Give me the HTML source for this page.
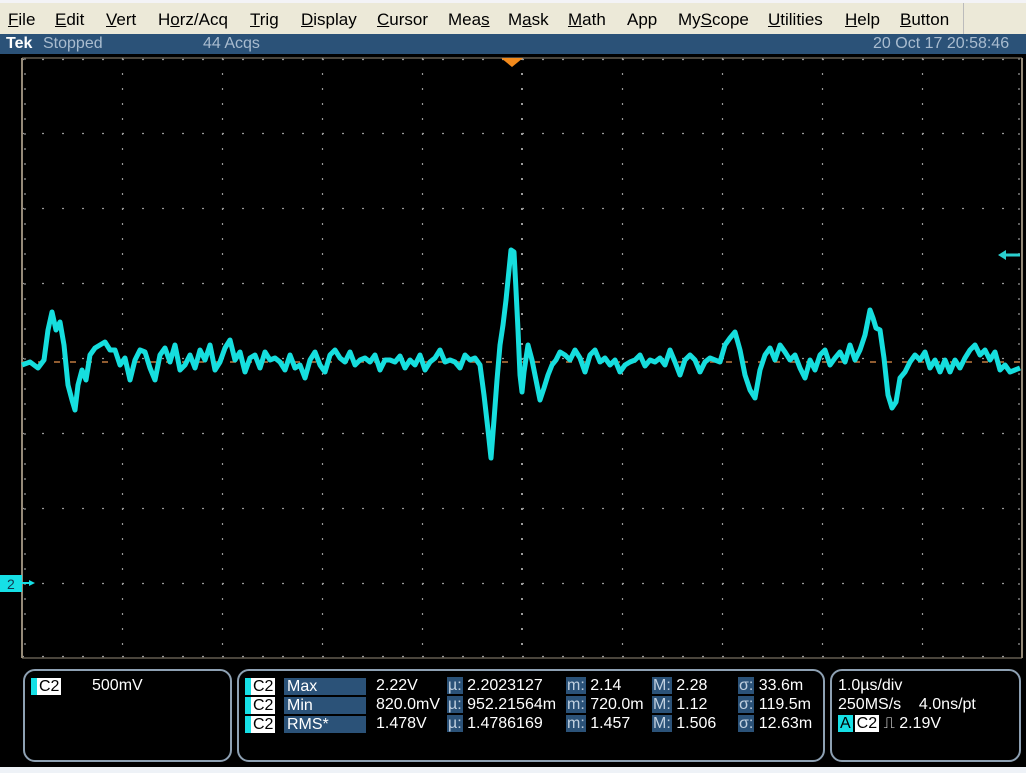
<!DOCTYPE html>
<html><head><meta charset="utf-8"><style>
*{margin:0;padding:0;box-sizing:border-box}
body{width:1026px;height:773px;overflow:hidden;background:#000;font-family:"Liberation Sans",sans-serif;position:relative}
#menu{position:absolute;left:0;top:0;width:1026px;height:34px;background:#ece9d8;border-top:3px solid #f3f3f6;font-size:17px;color:#000}
#menu span{position:absolute;top:7px}
#menu u{text-decoration:underline}
#menusep{position:absolute;left:963px;top:0;width:1px;height:34px;background:#bbb}
#stat{position:absolute;left:0;top:34px;width:1026px;height:20px;background:#2b5278;color:#a9bccf;font-size:16px}
#stat span{position:absolute;top:1px}
.box{position:absolute;top:669px;height:93px;border:2px solid #8ea1b3;border-radius:12px}
.t{position:absolute;color:#fff;font-size:16px;white-space:nowrap;line-height:18px}
.c2{position:absolute;background:#fff;color:#000;font-size:16px;line-height:17px;padding:0 2px;border-left:6px solid #16e0e6}
.lab{position:absolute;background:#2b5278;color:#fff;font-size:16px;line-height:17px;padding-left:3px;width:82px}
.k{background:#2b5278;color:#c0d0e0;padding:0 1px}
#bot{position:absolute;left:0;top:767px;width:1026px;height:6px;background:#eef2f7}
</style></head><body>
<div id="menu">
<span style="left:8px"><u>F</u>ile</span>
<span style="left:55px"><u>E</u>dit</span>
<span style="left:106px"><u>V</u>ert</span>
<span style="left:158px">H<u>o</u>rz/Acq</span>
<span style="left:250px"><u>T</u>rig</span>
<span style="left:301px"><u>D</u>isplay</span>
<span style="left:377px"><u>C</u>ursor</span>
<span style="left:448px">Mea<u>s</u></span>
<span style="left:508px">M<u>a</u>sk</span>
<span style="left:568px"><u>M</u>ath</span>
<span style="left:627px">App</span>
<span style="left:678px">My<u>S</u>cope</span>
<span style="left:768px"><u>U</u>tilities</span>
<span style="left:845px"><u>H</u>elp</span>
<span style="left:900px"><u>B</u>utton</span>
<div id="menusep"></div>
</div>
<div id="stat">
<span style="left:6px;color:#fff;font-weight:bold">Tek</span>
<span style="left:43px">Stopped</span>
<span style="left:203px">44 Acqs</span>
<span style="left:873px">20 Oct 17 20:58:46</span>
</div>
<svg style="position:absolute;left:0;top:54px" width="1026" height="613" viewBox="0 54 1026 613">
<g stroke="#9a9a9a" stroke-width="1.2">
<g stroke-dasharray="2 18">
<line x1="22" y1="59.5" x2="1022" y2="59.5"/>
<line x1="22" y1="133.5" x2="1022" y2="133.5"/>
<line x1="22" y1="208.5" x2="1022" y2="208.5"/>
<line x1="22" y1="283.5" x2="1022" y2="283.5"/>
<line x1="22" y1="358.5" x2="1022" y2="358.5"/>
<line x1="22" y1="433.5" x2="1022" y2="433.5"/>
<line x1="22" y1="508.5" x2="1022" y2="508.5"/>
<line x1="22" y1="583.5" x2="1022" y2="583.5"/>
<line x1="22" y1="656.5" x2="1022" y2="656.5"/>
</g>
<g stroke-dasharray="2 13">
<line x1="122.5" y1="58" x2="122.5" y2="658"/>
<line x1="222.5" y1="58" x2="222.5" y2="658"/>
<line x1="322.5" y1="58" x2="322.5" y2="658"/>
<line x1="422.5" y1="58" x2="422.5" y2="658"/>
<line x1="622.5" y1="58" x2="622.5" y2="658"/>
<line x1="722.5" y1="58" x2="722.5" y2="658"/>
<line x1="822.5" y1="58" x2="822.5" y2="658"/>
<line x1="922.5" y1="58" x2="922.5" y2="658"/>
<line x1="25" y1="58" x2="25" y2="658"/>
<line x1="1019" y1="58" x2="1019" y2="658"/>
</g>
<g stroke-dasharray="2 13">
<line x1="522" y1="58" x2="522" y2="658" stroke-width="2"/>
</g>
</g>
<line x1="22" y1="58" x2="22" y2="658" stroke="#958a78" stroke-width="2"/>
<line x1="1022" y1="58" x2="1022" y2="658" stroke="#958a78" stroke-width="2"/>
<line x1="22" y1="58" x2="1022" y2="58" stroke="#958a78" stroke-width="1"/>
<line x1="22" y1="658" x2="1022" y2="658" stroke="#958a78" stroke-width="1"/>
<line x1="22" y1="362" x2="1022" y2="362" stroke="#c07a40" stroke-width="1.5" stroke-dasharray="6 10"/>
<polyline fill="none" stroke="#16dede" stroke-width="5" stroke-linejoin="round" points="
22,365 30,362 38,368 44,360 48,330 52,312 56,330 60,322 64,345 68,385 72,400 75,410 78,385 82,370 86,380 90,355 95,348 100,345 105,342 110,350 115,350 120,365 125,358 130,380 135,360 140,350 145,352 150,368 155,380 160,355 165,348 170,362 175,345 180,370 185,365 190,355 195,368 200,350 205,360 210,345 215,370 220,362 225,348 230,340 235,360 240,352 245,372 250,358 255,355 260,368 265,352 270,360 275,358 280,362 285,370 290,355 295,368 300,365 305,378 310,360 315,352 320,365 325,372 330,355 335,350 340,358 345,362 350,352 355,365 360,360 365,358 370,362 375,355 380,370 385,360 390,360 395,362 400,356 405,368 410,360 415,365 420,355 425,370 430,362 435,358 440,350 445,362 450,360 455,362 460,368 465,355 470,360 475,358 480,365 484,395 488,430 491,458 494,420 497,380 500,345 503,325 506,300 509,270 511,250 514,252 516,290 518,330 520,375 522,392 524,372 528,345 532,360 536,380 540,400 544,388 548,375 552,365 556,360 560,352 565,355 570,360 575,350 580,358 585,372 590,355 595,350 600,362 605,358 610,365 615,360 620,372 625,365 630,362 635,360 640,355 645,366 650,360 655,362 660,358 665,365 670,350 675,362 680,375 685,360 690,355 695,360 700,372 705,362 710,358 715,360 720,362 725,345 730,338 735,332 740,350 745,375 750,390 755,398 760,370 765,355 770,348 775,360 780,345 785,352 790,360 795,355 800,368 805,378 810,360 815,370 820,355 825,350 830,365 835,358 840,352 845,362 850,345 855,360 860,350 865,335 870,310 873,318 876,328 880,330 884,358 888,395 892,408 896,402 900,378 905,372 910,362 915,355 920,360 925,352 930,368 935,360 940,372 945,360 950,372 955,360 960,368 965,358 970,350 975,345 980,355 985,350 990,360 995,352 1000,370 1005,365 1010,372 1015,370 1020,368"/>
<polygon points="501,58 523,58 512,67" fill="#f28a1c"/>
<polyline points="1020,255 1002,255" stroke="#2bcfcf" stroke-width="3"/>
<polygon points="998,255 1006,250 1006,260" fill="#2bcfcf"/>
<rect x="0" y="575" width="22" height="17" fill="#16e0e6"/>
<text x="7" y="589" font-size="14" fill="#12384f" font-family="Liberation Sans">2</text>
<line x1="22" y1="583" x2="30" y2="583" stroke="#16e0e6" stroke-width="2"/>
<polygon points="35,583 29,580 29,586" fill="#16e0e6"/>
</svg>

<div class="box" style="left:23px;width:209px"></div>
<div class="box" style="left:237px;width:588px"></div>
<div class="box" style="left:830px;width:191px"></div>

<div class="c2" style="left:31px;top:678px">C2</div>
<div class="t" style="left:92px;top:677px">500mV</div>

<div class="c2" style="left:245px;top:678px">C2</div>
<div class="c2" style="left:245px;top:697px">C2</div>
<div class="c2" style="left:245px;top:716px">C2</div>
<div class="lab" style="left:284px;top:678px">Max</div>
<div class="lab" style="left:284px;top:697px">Min</div>
<div class="lab" style="left:284px;top:716px">RMS*</div>
<div class="t" style="left:376px;top:677px">2.22V</div>
<div class="t" style="left:376px;top:696px">820.0mV</div>
<div class="t" style="left:376px;top:715px">1.478V</div>
<div class="t" style="left:447px;top:677px"><span class="k">µ:</span> 2.2023127</div>
<div class="t" style="left:447px;top:696px"><span class="k">µ:</span> 952.21564m</div>
<div class="t" style="left:447px;top:715px"><span class="k">µ:</span> 1.4786169</div>
<div class="t" style="left:566px;top:677px"><span class="k">m:</span> 2.14</div>
<div class="t" style="left:566px;top:696px"><span class="k">m:</span> 720.0m</div>
<div class="t" style="left:566px;top:715px"><span class="k">m:</span> 1.457</div>
<div class="t" style="left:652px;top:677px"><span class="k">M:</span> 2.28</div>
<div class="t" style="left:652px;top:696px"><span class="k">M:</span> 1.12</div>
<div class="t" style="left:652px;top:715px"><span class="k">M:</span> 1.506</div>
<div class="t" style="left:738px;top:677px"><span class="k">σ:</span> 33.6m</div>
<div class="t" style="left:738px;top:696px"><span class="k">σ:</span> 119.5m</div>
<div class="t" style="left:738px;top:715px"><span class="k">σ:</span> 12.63m</div>

<div class="t" style="left:838px;top:677px">1.0µs/div</div>
<div class="t" style="left:838px;top:696px">250MS/s&nbsp;&nbsp;&nbsp; 4.0ns/pt</div>
<div class="t" style="left:838px;top:715px"><span style="background:#16e0e6;color:#000;padding:0 2px">A</span><span style="background:#fff;color:#000;padding:0 2px;margin-left:2px">C2</span> ⎍ 2.19V</div>
<div id="bot"></div>
</body></html>
